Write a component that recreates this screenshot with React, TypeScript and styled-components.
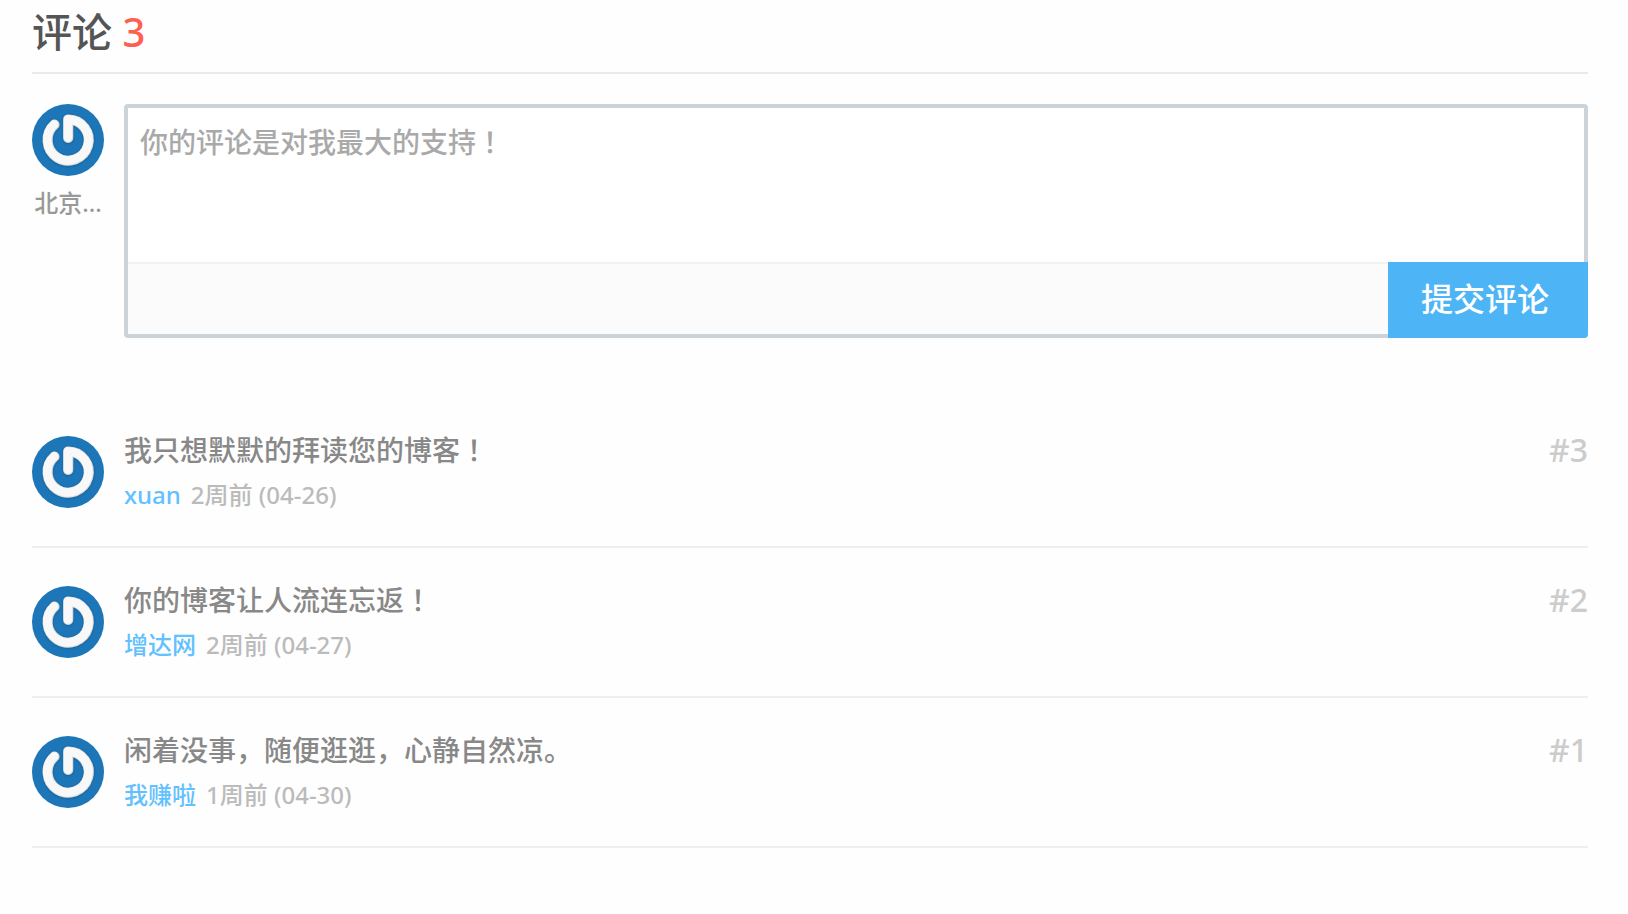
import React, { useId, useState } from "react";
import styled, { createGlobalStyle } from "styled-components";

const GlobalStyle = createGlobalStyle`
  * { box-sizing: border-box; }
  body {
    margin: 0;
    background: #fefefe;
    color: #888;
    font-family: "Noto Sans", "Noto Sans CJK SC", sans-serif;
    font-weight: 500;
  }
`;

const Page = styled.main`
  padding: 0 40px 0 32px;
`;

const Title = styled.h2`
  margin: 0;
  height: 74px;
  border-bottom: 2px solid #eaeaea;
  color: #555;
  font-size: 40px;
  font-weight: 500;
  line-height: 64px;
`;

const Count = styled.span`
  color: #ff5e52;
`;

const Form = styled.form`
  display: flex;
  gap: 20px;
  margin-top: 30px;
`;

const Visitor = styled.div`
  width: 72px;
  flex: none;
`;

const VisitorName = styled.p`
  margin: 8px 0 0;
  overflow: hidden;
  color: #999;
  font-size: 24px;
  line-height: 38px;
  text-align: center;
  white-space: nowrap;
`;

const Round = styled.svg`
  display: block;
  flex: none;
  width: 72px;
  height: 72px;
  border-radius: 50%;
`;

const Editor = styled.div`
  flex: 1;
  min-width: 0;
  display: flex;
  flex-direction: column;
  border: 4px solid #ccd4d9;
  border-radius: 4px;
`;

const Field = styled.textarea`
  display: block;
  width: 100%;
  height: 154px;
  padding: 12px;
  border: 0;
  outline: 0;
  resize: none;
  background: #fff;
  color: #555;
  font: inherit;
  font-size: 28px;
  line-height: 44px;

  &::placeholder {
    color: #a9a9a9;
    font-family: "Noto Sans", "Noto Sans CJK TC", sans-serif;
    opacity: 1;
  }
`;

const Toolbar = styled.div`
  display: flex;
  justify-content: flex-end;
  height: 72px;
  border-top: 2px solid #f2f2f2;
  background: #fbfbfb;
`;

const Submit = styled.button`
  width: 200px;
  height: 76px;
  margin: -2px -4px -4px 0;
  padding: 0 6px 6px 0;
  border: 0;
  border-radius: 0 0 4px 0;
  background: #4db5f6;
  color: #fff;
  font: inherit;
  font-size: 32px;
  cursor: pointer;
`;

const List = styled.ol`
  margin: 60px 0 0;
  padding: 0;
  list-style: none;
`;

const Item = styled.li`
  display: flex;
  gap: 20px;
  padding: 38px 0;
  border-bottom: 2px solid #eee;
`;

const Body = styled.div`
  flex: 1;
  min-width: 0;
  margin: -8px 0 -10px;
`;

const Content = styled.p`
  margin: 0;
  font-size: 28px;
  line-height: 44px;
`;

const Mark = styled.span`
  font-family: "Noto Sans CJK TC", sans-serif;
  line-height: 1;
`;

const Meta = styled.div`
  display: flex;
  gap: 10px;
  color: #bbb;
  font-size: 24px;
  line-height: 46px;
`;

const Author = styled.a`
  color: #61c1ff;
  text-decoration: none;
`;

const Floor = styled.span`
  height: 44px;
  margin-top: -8px;
  color: #ccc;
  font-size: 32px;
  line-height: 44px;
`;

function Avatar() {
  const id = useId();
  return (
    <Round viewBox="0 0 72 72" aria-hidden="true">
      <defs>
        <filter id={id} x="-20%" y="-20%" width="140%" height="140%">
          <feDropShadow dx="0" dy="0.5" stdDeviation="0.8" floodColor="#073b66" floodOpacity="0.5" />
        </filter>
      </defs>
      <rect width="72" height="72" fill="#1c76b8" />
      <g fill="none" strokeLinecap="round" strokeLinejoin="round">
        <path
          d="M22.5 20.6A20.6 20.6 0 1 0 36.2 15.4V34"
          stroke="#d9dadb"
          strokeWidth="10"
          filter={`url(#${id})`}
        />
        <path d="M22.2 20.4A20.6 20.6 0 1 0 35.9 15.2V33.6" stroke="#f8f8f8" strokeWidth="8.6" />
      </g>
    </Round>
  );
}

const comments = [
  { floor: 3, text: "我只想默默的拜读您的博客", end: "！", author: "xuan", time: "2周前 (04-26)" },
  { floor: 2, text: "你的博客让人流连忘返", end: "！", author: "增达网", time: "2周前 (04-27)" },
  { floor: 1, text: "闲着没事，随便逛逛，心静自然凉。", end: "", author: "我赚啦", time: "1周前 (04-30)" },
];

export default function App() {
  const [draft, setDraft] = useState("");
  return (
    <>
      <GlobalStyle />
      <Page>
        <Title>
          评论 <Count>{comments.length}</Count>
        </Title>
        <Form onSubmit={(e) => e.preventDefault()}>
          <Visitor>
            <Avatar />
            <VisitorName>北京...</VisitorName>
          </Visitor>
          <Editor>
            <Field
              aria-label="评论"
              placeholder="你的评论是对我最大的支持！"
              value={draft}
              onChange={(e) => setDraft(e.target.value)}
            />
            <Toolbar>
              <Submit type="submit">提交评论</Submit>
            </Toolbar>
          </Editor>
        </Form>
        <List>
          {comments.map((c) => (
            <Item key={c.floor}>
              <Avatar />
              <Body>
                <Content>
                  {c.text}
                  {c.end && <Mark>{c.end}</Mark>}
                </Content>
                <Meta>
                  <Author href="#">{c.author}</Author>
                  <span>{c.time}</span>
                </Meta>
              </Body>
              <Floor>#{c.floor}</Floor>
            </Item>
          ))}
        </List>
      </Page>
    </>
  );
}
